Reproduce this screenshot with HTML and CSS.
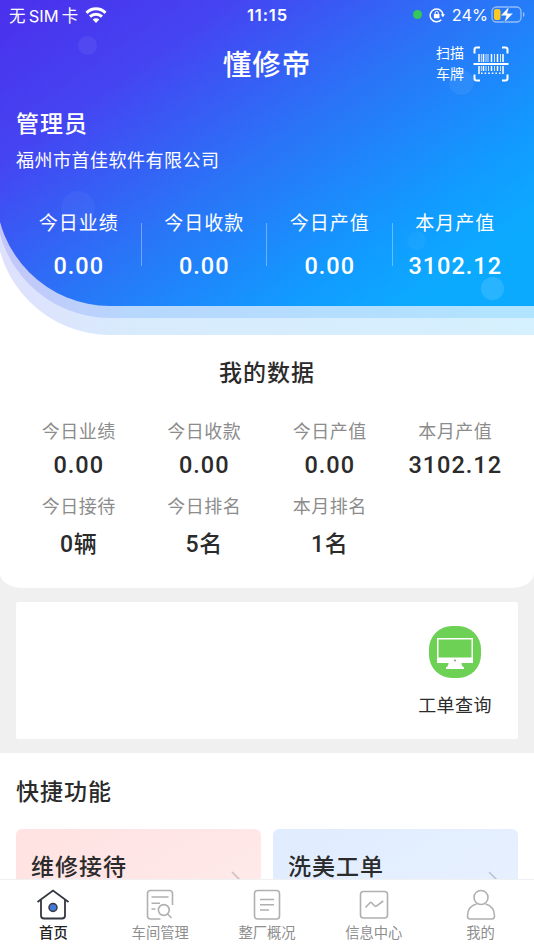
FILE: index.html
```html
<!DOCTYPE html>
<html lang="zh-CN">
<head>
    <meta charset="UTF-8">
    <meta name="viewport" content="width=device-width, initial-scale=1.0">
    <title>懂修帝</title>
    <link rel="stylesheet" href="styles.css">
</head>
<body>
    <div class="app">
        <div class="wave wave-outer">
            <div class="wave wave-inner">
                <header class="wave hero">
                    <span class="bubble bubble-1"></span>
                    <span class="bubble bubble-2"></span>
                    <span class="bubble bubble-3"></span>
                    <span class="bubble bubble-4"></span>
                    <span class="bubble bubble-5"></span>

                    <div class="status-bar">
                        <div class="status-left">
                            <span>无 SIM 卡</span>
                            <svg width="22" height="16" viewBox="0 0 22 16" fill="none" stroke="#fff" stroke-width="3">
                                <path d="M1.500 5.800C7 .5 15 .5 20.500 5.800"/>
                                <path d="M5 9.600c3.500-3.200 8.500-3.200 12 0"/>
                                <path d="M11 16l-3.300-3.500c2-1.800 4.600-1.800 6.600 0z" fill="#fff" stroke="none"/>
                            </svg>
                        </div>
                        <div class="status-time">11:15</div>
                        <div class="status-right">
                            <span class="status-dot"></span>
                            <svg class="lock" width="16" height="16" viewBox="0 0 16 16" fill="none" stroke="#fff" stroke-width="1.500">
                                <path d="M12.300 12.700A6.400 6.400 0 1 1 14 8"/>
                                <path d="M11.800 7.300h4.200l-2.100 2.900z" fill="#fff" stroke="none"/>
                                <rect x="4.900" y="7" width="5.600" height="4.200" rx=".6" fill="#fff" stroke="none"/>
                                <path d="M6.100 7.200V6a1.600 1.600 0 0 1 3.200 0v1.200" stroke-width="1"/>
                            </svg>
                            <span class="percent">24%</span>
                            <svg width="35" height="18" viewBox="0 0 35 18">
                                <rect x="1" y="1" width="29" height="15" rx="4.500" fill="none" stroke="#fff" stroke-opacity=".5" stroke-width="1.300"/>
                                <path d="M32 6v5c2-.8 2-4.200 0-5z" fill="#fff" fill-opacity=".5"/>
                                <rect x="3" y="3" width="6.500" height="11" rx="2" fill="#fbc926"/>
                                <path d="M18.300.300L9.500 9.800h5.700l-2 6.900 9-9.500h-5.800z" fill="#fff" stroke="#2877f2" stroke-width=".5"/>
                            </svg>
                        </div>
                    </div>

                    <div class="title-bar">
                        <h1>懂修帝</h1>
                        <div class="scan">
                            <div class="scan-text">扫描<br>车牌</div>
                            <svg width="36" height="36" viewBox="0 0 36 36" fill="none" stroke="#fff">
                                <path d="M1.500 7.500V3.500q0-2 2-2H7M29 1.500h3.500q2 0 2 2v4M34.500 28.500v4q0 2-2 2H29M7 34.500H3.500q-2 0-2-2v-4" stroke-width="2"/>
                                <path d="M.5 18h35" stroke-width="2"/>
                                <path d="M6 8v8M10.500 8v8M18.500 8v8M24.500 8v8M30 8v8M6 20v8M10.500 20v5M18.500 20v5M24.500 20v5M30 20v8" stroke-width="1.500"/>
                                <path d="M8.300 8v8M13 8v8M15 8v8M21.500 8v8M27.500 8v8M8.300 20v5M13 20v5M15.500 20v5M21.500 20v5M27.500 20v5" stroke-width=".8"/>
                                <path d="M8 27.200h20" stroke-width="1.600" stroke-dasharray="1.600 2"/>
                            </svg>
                        </div>
                    </div>

                    <div class="user">
                        <div class="user-name">管理员</div>
                        <div class="user-company">福州市首佳软件有限公司</div>
                    </div>

                    <div class="hero-stats">
                        <div class="hero-stat">
                            <div class="hero-label">今日业绩</div>
                            <div class="number">0.00</div>
                        </div>
                        <div class="hero-stat">
                            <div class="hero-label">今日收款</div>
                            <div class="number">0.00</div>
                        </div>
                        <div class="hero-stat">
                            <div class="hero-label">今日产值</div>
                            <div class="number">0.00</div>
                        </div>
                        <div class="hero-stat">
                            <div class="hero-label">本月产值</div>
                            <div class="number">3102.12</div>
                        </div>
                    </div>
                </header>
            </div>
        </div>

        <section class="my-data">
            <h2>我的数据</h2>
            <div class="data-grid">
                <div class="data-item">
                    <div class="data-label">今日业绩</div>
                    <div class="number">0.00</div>
                </div>
                <div class="data-item">
                    <div class="data-label">今日收款</div>
                    <div class="number">0.00</div>
                </div>
                <div class="data-item">
                    <div class="data-label">今日产值</div>
                    <div class="number">0.00</div>
                </div>
                <div class="data-item">
                    <div class="data-label">本月产值</div>
                    <div class="number">3102.12</div>
                </div>
                <div class="data-item">
                    <div class="data-label">今日接待</div>
                    <div class="number">0辆</div>
                </div>
                <div class="data-item">
                    <div class="data-label">今日排名</div>
                    <div class="number">5名</div>
                </div>
                <div class="data-item">
                    <div class="data-label">本月排名</div>
                    <div class="number">1名</div>
                </div>
            </div>
        </section>

        <section class="orders">
            <div class="order-link">
                <div class="order-icon">
                    <svg width="36" height="32" viewBox="0 0 36 32">
                        <path d="M0 0h36v25H0z" fill="#fff"/>
                        <path d="M1.500 1.500h33v18h-33z" fill="#6dd155"/>
                        <path d="M11.500 25h13q0 3.500 2.500 4.200V31H9v-1.800q2.500-.7 2.500-4.200z" fill="#fff"/>
                        <circle cx="18" cy="22.500" r=".9" fill="#8b8b8b"/>
                    </svg>
                </div>
                <div class="order-text">工单查询</div>
            </div>
        </section>

        <section class="quick">
            <h2>快捷功能</h2>
            <div class="quick-cards">
                <div class="quick-card quick-red">
                    <span>维修接待</span>
                    <svg width="10" height="16" viewBox="0 0 10 16" fill="none" stroke="#cdbfc2" stroke-width="1.600">
                        <path d="M1 1l7 7-7 7"/>
                    </svg>
                </div>
                <div class="quick-card quick-blue">
                    <span>洗美工单</span>
                    <svg width="10" height="16" viewBox="0 0 10 16" fill="none" stroke="#bcc4d0" stroke-width="1.600">
                        <path d="M1 1l7 7-7 7"/>
                    </svg>
                </div>
            </div>
        </section>

        <nav class="tab-bar">
            <div class="tab active">
                <svg width="34" height="32" viewBox="0 0 34 32" fill="none" stroke="#333740" stroke-width="1.800">
                    <path d="M1.500 13L17 1.500 32.500 13"/>
                    <path d="M5 11v15.500q0 3 3 3h18q3 0 3-3V11"/>
                    <circle cx="17" cy="18.500" r="4" fill="#4278d8" stroke-width="1.500"/>
                </svg>
                <span>首页</span>
            </div>
            <div class="tab">
                <svg width="34" height="32" viewBox="0 0 34 32" fill="none" stroke="#b0b0b0" stroke-width="1.600">
                    <path d="M17.500 30H7.500q-3 0-3-3V4.500q0-3 3-3h19q3 0 3 3V16M8.500 8h17M8.500 14.200h8.500M8.500 20h4"/>
                    <circle cx="20.800" cy="21" r="5.400"/>
                    <path d="M24.500 25l4 4"/>
                </svg>
                <span>车间管理</span>
            </div>
            <div class="tab">
                <svg width="34" height="32" viewBox="0 0 34 32" fill="none" stroke="#b0b0b0" stroke-width="1.600">
                    <rect x="4.500" y="1.500" width="25" height="28.500" rx="3"/>
                    <path d="M10 10.500h14M10 15.700h14M10 21h9"/>
                </svg>
                <span>整厂概况</span>
            </div>
            <div class="tab">
                <svg width="34" height="32" viewBox="0 0 34 32" fill="none" stroke="#b0b0b0" stroke-width="1.600">
                    <rect x="3.500" y="2.500" width="27" height="26.500" rx="3"/>
                    <path d="M8.500 18.500l4.500-4.700q.8-.8 1.600 0l3.200 3.200q.8.800 1.600 0l6.800-5"/>
                </svg>
                <span>信息中心</span>
            </div>
            <div class="tab">
                <svg width="34" height="32" viewBox="0 0 34 32" fill="none" stroke="#b0b0b0" stroke-width="1.600">
                    <circle cx="17" cy="8.500" r="7"/>
                    <path d="M12.500 15C7 16.500 3.500 21 3.500 27q0 3 2.500 3h22q2.500 0 2.500-3c0-6-3.500-10.500-9-12"/>
                </svg>
                <span>我的</span>
            </div>
        </nav>
    </div>
</body>
</html>
```
FILE: styles.css
```css
* {
    box-sizing: border-box;
}

body {
    margin: 0;
    overflow: hidden;
    font-family: Roboto, "Noto Sans CJK SC", sans-serif;
    background: #f0f0f0;
    color: #2b2b2b;
}

h1, h2 {
    margin: 0;
    font-weight: 500;
}

svg {
    display: block;
    flex-shrink: 0;
}

.app {
    display: flex;
    flex-direction: column;
    height: 950px;
    overflow: hidden;
    background: linear-gradient(#fff 400px, #f0f0f0 400px);
}

/* three stacked shapes sharing the same bottom-left curve */
.wave {
    border-bottom-left-radius: 114px;
}

.wave-outer {
    flex-shrink: 0;
    margin-left: -4px;
    padding-bottom: 17px;
    background: linear-gradient(90deg, #dfe0fc, #d8ebfd 25%, #d5f0fe);
}

.wave-inner {
    padding-bottom: 12px;
    background: linear-gradient(90deg, #c4c5f9, #b7d7fd 25%, #b1e4ff);
}

.hero {
    position: relative;
    height: 306px;
    padding-left: 4px;
    overflow: hidden;
    background: linear-gradient(145deg, #4b2feb, #4544f2 24%, #2a74f7 50%, #129aff 74%, #0caaff 87%);
    color: #fff;
}

.bubble {
    position: absolute;
    border-radius: 50%;
    background: rgba(255, 255, 255, 0.06);
}

.bubble-1 {
    top: 36px;
    left: 82px;
    width: 19px;
    height: 19px;
}

.bubble-2 {
    top: 191px;
    left: 65px;
    width: 34px;
    height: 34px;
    background: rgba(255, 255, 255, 0.04);
}

.bubble-3 {
    top: 70px;
    left: 453px;
    width: 25px;
    height: 25px;
}

.bubble-4 {
    top: 231px;
    left: 411px;
    width: 19px;
    height: 19px;
    background: rgba(255, 255, 255, 0.04);
}

.bubble-5 {
    top: 277px;
    left: 485px;
    width: 23px;
    height: 23px;
    background: rgba(255, 255, 255, 0.12);
}

.status-bar {
    display: grid;
    grid-template-columns: 1fr auto 1fr;
    align-items: center;
    height: 29px;
    padding: 0 8px 0 9px;
    font-family: Inter, "Noto Sans CJK SC", sans-serif;
    font-size: 16.5px;
}

.status-left, .status-right {
    display: flex;
    align-items: center;
}

.status-left {
    gap: 7px;
}

.status-left span {
    word-spacing: -1.5px;
}

.status-time {
    font-size: 16.5px;
    font-weight: 600;
    letter-spacing: 0.9px;
}

.status-right {
    justify-content: flex-end;
}

.status-dot {
    width: 9px;
    height: 9px;
    border-radius: 50%;
    background: #35c759;
}

.lock {
    margin: 0 7px;
}

.percent {
    margin-right: 3px;
    font-size: 16.3px;
}

.title-bar {
    display: grid;
    grid-template-columns: 1fr auto 1fr;
    align-items: center;
    height: 70px;
    padding: 0 25px;
}

.title-bar h1 {
    grid-column: 2;
    padding-bottom: 4px;
    font-size: 28.5px;
    letter-spacing: 1px;
}

.scan {
    display: flex;
    justify-content: flex-end;
    align-items: center;
    gap: 9px;
}

.scan-text {
    font-size: 14px;
    line-height: 21px;
}

.user {
    padding: 9px 16px 0;
}

.user-name {
    font-size: 23px;
    font-weight: 500;
    line-height: 34px;
    letter-spacing: 1px;
}

.user-company {
    margin-top: 5px;
    font-size: 18px;
    line-height: 28px;
    letter-spacing: 0.5px;
}

.hero-stats {
    display: grid;
    grid-template-columns: repeat(4, 1fr);
    margin-top: 35px;
    padding: 0 16px;
}

.hero-stat {
    position: relative;
    text-align: center;
}

.hero-stat + .hero-stat::before {
    content: "";
    position: absolute;
    top: 13px;
    left: -1px;
    width: 1px;
    height: 43px;
    background: rgba(255, 255, 255, 0.35);
}

.hero-label {
    font-size: 19px;
    line-height: 28px;
    letter-spacing: 1px;
}

.hero-stat .number {
    margin-top: 13px;
}

.number {
    font-size: 23.5px;
    font-weight: 500;
    line-height: 30px;
    letter-spacing: 1px;
}

.my-data {
    flex-shrink: 0;
    height: 253px;
    padding: 22px 16px 0;
    border-radius: 0 0 24px 24px / 0 0 14px 14px;
    background: #fff;
}

.my-data h2 {
    font-size: 23px;
    line-height: 34px;
    letter-spacing: 1px;
    text-align: center;
}

.data-grid {
    display: grid;
    grid-template-columns: repeat(4, 1fr);
    row-gap: 13px;
    margin-top: 27px;
    text-align: center;
}

.data-label {
    color: #8c8c8c;
    font-size: 18px;
    line-height: 27px;
    letter-spacing: 0.5px;
}

.data-item .number {
    margin-top: 5px;
}

.data-item:nth-child(n+5) .number {
    margin-top: 10px;
    font-size: 23px;
    letter-spacing: 0.6px;
}

.orders {
    display: flex;
    flex-shrink: 0;
    justify-content: flex-end;
    height: 137px;
    margin: 14px 16px;
    border-radius: 2px;
    background: #fff;
}

.order-link {
    display: flex;
    flex-direction: column;
    align-items: center;
    width: 126px;
    padding-top: 24px;
}

.order-icon {
    display: flex;
    align-items: center;
    justify-content: center;
    width: 52px;
    height: 52px;
    padding-top: 4px;
    border-radius: 23px;
    background: #6dd155;
}

.order-text {
    margin-top: 15px;
    font-size: 18px;
    line-height: 26px;
    letter-spacing: 0.4px;
}

.quick {
    flex: 1;
    min-height: 0;
    padding: 23px 16px 0;
    overflow: hidden;
    background: #fff;
}

.quick h2 {
    font-size: 23px;
    line-height: 34px;
    letter-spacing: 1px;
}

.quick-cards {
    display: grid;
    grid-template-columns: 1fr 1fr;
    gap: 12px;
    margin-top: 19px;
}

.quick-card {
    display: flex;
    justify-content: space-between;
    height: 110px;
    padding: 27px 20px 0 15px;
    border-radius: 6px;
    font-size: 23px;
    font-weight: 500;
    line-height: 23px;
    letter-spacing: 1px;
}

.quick-card svg {
    margin-top: 15px;
}

.quick-red {
    background: linear-gradient(150deg, #ffe2e2, #ffebeb);
}

.quick-blue {
    background: linear-gradient(150deg, #e0ecff, #e8f1ff);
}

.tab-bar {
    display: grid;
    flex-shrink: 0;
    grid-template-columns: repeat(5, 1fr);
    height: 71px;
    border-top: 1px solid #f0f0f2;
    background: #fff;
}

.tab {
    display: flex;
    flex-direction: column;
    align-items: center;
    padding-top: 9px;
    color: #8e8e8e;
    font-size: 14.3px;
    line-height: 20px;
}

.tab span {
    margin-top: 2px;
}

.tab.active {
    color: #222;
    font-weight: 500;
}
```
